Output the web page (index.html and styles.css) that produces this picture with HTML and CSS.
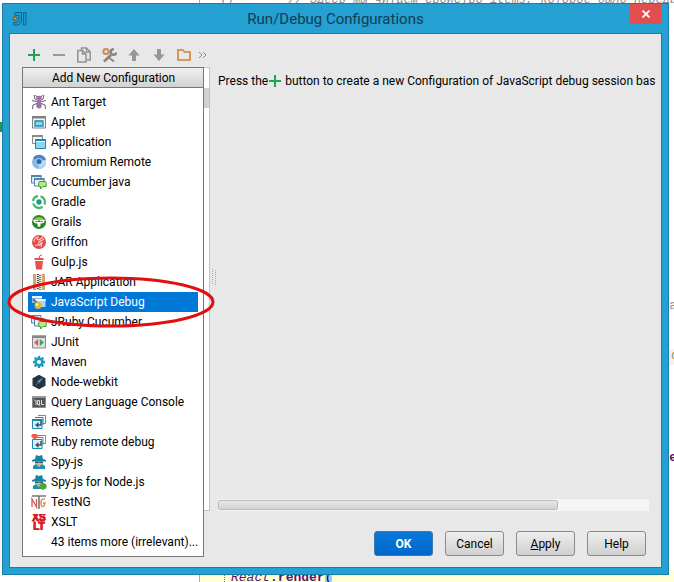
FILE: index.html
```
<!DOCTYPE html>
<html lang="en">
<head>
<meta charset="utf-8">
<title>Run/Debug Configurations</title>
<link rel="stylesheet" href="styles.css">
</head>
<body>
<div class="stage">
  <div class="editor" aria-hidden="true">
    <div class="line comment"><span>{}</span><span>// Здесь мы читаем свойство items, которое было передано</span></div>
    <div class="editor-rest">
      <span class="gutter"><i class="mark"></i></span>
      <span class="right-code"><i class="frag comment">ta</i><i class="frag olive">c</i><i class="frag purple">se</i></span>
    </div>
    <div class="line call"><span class="fold"></span><em>React</em>.<b>render</b><span class="paren">(</span></div>
  </div>

  <main class="dialog">
    <header class="titlebar">
      <svg class="logo" viewBox="0 0 16 16"><path d="M3 1.500H9.500V9Q9.500 14 4 14H1.500V11.500H4Q7 11 7 8V4.500H3Z" fill="#1c9bd0" stroke="#0b6896"/><path d="M11.500 1.500H14V14H11.500Z" fill="#1c9bd0" stroke="#0b6896"/><circle cx="3" cy="7.500" r="1.800" fill="#e58a20" stroke="#70501f"/></svg>
      <h1>Run/Debug Configurations</h1>
      <button class="close" aria-label="Close"><svg viewBox="0 0 8 8"><path d="M.5.5L7.500 7.500M7.500.5L.5 7.500" stroke="#fff" stroke-width="1.700"/></svg></button>
    </header>

    <div class="content">
      <div class="toolbar">
        <button aria-label="Add"><svg viewBox="0 0 16 16"><path d="M8 2V14M2 8H14" stroke="#1fa354" stroke-width="2"/></svg></button>
        <button aria-label="Remove"><svg viewBox="0 0 16 16"><path d="M2 8H14" stroke="#9a9a9a" stroke-width="2"/></svg></button>
        <button aria-label="Copy"><svg viewBox="0 0 16 16" fill="#e8e8e8" stroke="#929292" stroke-width="1.500"><path d="M5.500 1H10.500L14.200 5V13H5.500Z"/><path d="M1.800 3.500H6.500L10 7V15H1.800Z"/><path d="M6.500 3.500V7H10M10.500 1V5H14" fill="none"/></svg></button>
        <button aria-label="Edit defaults"><svg viewBox="0 0 16 16" fill="none"><circle cx="5" cy="4.500" r="2.600" stroke="#cb8a50" stroke-width="2"/><path d="M3 14.500L10 8" stroke="#858585" stroke-width="2.800"/><path d="M12.800 2.200A2.800 2.800 0 1 0 15.300 5.500" stroke="#858585" stroke-width="2.400"/><path d="M7.500 10.500L13 14.500" stroke="#858585" stroke-width="1.800"/></svg></button>
        <button aria-label="Move up"><svg viewBox="0 0 16 16"><path d="M8 2L13.500 8.500H10V14H6V8.500H2.500Z" fill="#969696"/></svg></button>
        <button aria-label="Move down"><svg viewBox="0 0 16 16"><path d="M8 14L13.500 7.500H10V2H6V7.500H2.500Z" fill="#969696"/></svg></button>
        <button aria-label="New folder"><svg viewBox="0 0 16 16"><path d="M2 3H7L8.500 5H14V13H2Z" fill="none" stroke="#cf9a60" stroke-width="2"/></svg></button>
        <button class="more" aria-label="More"><svg viewBox="0 0 9 8"><path d="M1 1L4 4L1 7M5 1L8 4L5 7" fill="none" stroke="#8f8f8f"/></svg></button>
      </div>

      <div class="panes">
        <aside class="tree">
          <div class="tree-scroll"></div>
          <section class="popup">
            <h2>Add New Configuration</h2>
            <ul>
              <li><button><svg viewBox="0 0 16 16"><g fill="none" stroke="#655f69"><path d="M8 7L4 5L3 1M8 7L12 5L13 1M7 8L1 6.500M9 8L15 6.500M7 9L2 11L1.500 15M9 9L14 11L14.500 15M6 3L4.500 1M10 3L11.500 1"/></g><ellipse cx="8" cy="3.700" rx="2.800" ry="2" fill="#a36bb1"/><circle cx="8" cy="7.300" r="1.900" fill="#a36bb1"/><ellipse cx="8" cy="11.500" rx="2.700" ry="3" fill="#a36bb1"/></svg>Ant Target</button></li>
              <li><button><svg viewBox="0 0 16 16"><path d="M1.500 2.500H14.500V14H1.500Z" fill="#f4f6f7" stroke="#808080"/><path d="M1 2H15V4.500H1Z" fill="#808080"/><path d="M4 7H12V12H4Z" fill="#8fd6ed" stroke="#1d89ab" stroke-width="1.300"/></svg>Applet</button></li>
              <li><button><svg viewBox="0 0 16 16"><path d="M1.500 1.500H11.500V9.500H1.500Z" fill="#f6f8f9" stroke="#8a8a8a"/><path d="M1 1H12V3H1Z" fill="#8a8a8a"/><path d="M4.500 6H14.500V14.500H4.500Z" fill="#90d5ed" stroke="#1c88ab"/><path d="M4 5H15V7H4Z" fill="#1c88ab"/><path d="M5 7H14V8H5Z" fill="#fff"/></svg>Application</button></li>
              <li><button><svg viewBox="0 0 16 16"><circle cx="8" cy="8" r="7" fill="#84b9e6"/><path d="M8 8L2 4Q5 0 10 1Q14 2 15 6H8Z" fill="#4d88c4"/><path d="M8 8L15 6Q16 12 8 15Z" fill="#b5d9f4"/><circle cx="8" cy="7.500" r="3.300" fill="#cfe6fa"/><circle cx="8" cy="7.500" r="2.600" fill="#2f6aae"/></svg>Chromium Remote</button></li>
              <li><button><svg viewBox="0 0 16 16"><path d="M.5 1.500H10V9H.5Z" fill="#dcebf4" stroke="#5784aa"/><path d="M3.500 4.500H13V12H3.500Z" fill="#eaf4fa" stroke="#5784aa"/><path d="M0 1H10.500V3H0ZM3 4H13.500V6H3Z" fill="#5784aa"/><path d="M8.500 7.500H14.500Q16 9 15 12.500H12L9.500 15V12.500H8Q6.500 10 8.500 7.500Z" fill="#b6e88a" stroke="#449d2f"/></svg>Cucumber java</button></li>
              <li><button><svg viewBox="0 0 16 16"><path d="M9.500 2.300A6 6 0 0 1 13.500 10.500M11.500 12.800A6 6 0 0 1 2.200 9.500M2 7A6 6 0 0 1 7 2" fill="none" stroke="#4cb56f" stroke-width="2.300"/><circle cx="8" cy="8" r="2.700" fill="#12a38a"/></svg>Gradle</button></li>
              <li><button><svg viewBox="0 0 16 16"><circle cx="8" cy="8" r="7" fill="#278726"/><path d="M2 6Q8 0 14 6L12 7H4Z" fill="#8cc94e"/><path d="M2 6H7V8H9V6H14Q13 10 9.500 9.500L9.500 12L8 13L6.500 12V9.500Q3 10 2 6Z" fill="#fff"/><path d="M4 7H6.500V8H5ZM9.500 7H12L11 8H9.500Z" fill="#267a23"/></svg>Grails</button></li>
              <li><button><svg viewBox="0 0 16 16"><circle cx="8" cy="8" r="7" fill="#de4d48"/><path d="M3 8Q3 4 7 3Q5 6 8 6L12 3M4 11Q8 12 8 8L13 5M8 12L11 8L10 13" fill="none" stroke="#ffd5d0" stroke-width="1.100"/></svg>Griffon</button></li>
              <li><button><svg viewBox="0 0 16 16"><path d="M8 5L8.500 2L11 .8" fill="none" stroke="#db5350"/><path d="M3.500 4H12.500V6H3.500ZM4 7H12L11 15.500H5Z" fill="#eb4f4b"/></svg>Gulp.js</button></li>
              <li><button><svg viewBox="0 0 16 16"><path d="M2 0H5V16H2ZM11 0H14V16H11Z" fill="#d6a36e"/><path d="M5 0H11V16H5Z" fill="#e9e6e0"/><path d="M7 0V16" stroke="#555" stroke-width="2" stroke-dasharray="1 1"/><path d="M9 1V16" stroke="#777" stroke-width="2" stroke-dasharray="1 1"/></svg>JAR Application</button></li>
              <li class="selected"><button><svg viewBox="0 0 16 16"><path d="M1 2H11V9H1Z" fill="#8dbde7"/><path d="M4 5H14.500V13H4Z" fill="#a9d4f3"/><path d="M1 2H11V4H1ZM4 5H14.500V7H4Z" fill="#e8f5fc"/><path d="M2 5L6 9" stroke="#4f739c" stroke-width="2"/><circle cx="7" cy="11.500" r="3.500" fill="#d9b92d"/><circle cx="6" cy="10.500" r="1.300" fill="#fff5a5"/></svg>JavaScript Debug</button>
                <svg class="callout" viewBox="0 0 208 52" preserveAspectRatio="none"><ellipse cx="104" cy="26" rx="102" ry="24" fill="none" stroke="#e01010" stroke-width="3"/></svg></li>
              <li><button><svg viewBox="0 0 16 16"><path d="M.5 1.500H10V9H.5Z" fill="#dcebf4" stroke="#5784aa"/><path d="M3.500 4.500H13V12H3.500Z" fill="#eaf4fa" stroke="#5784aa"/><path d="M8.500 7.500H14.500Q16 9 15 12.500H12L9.500 15V12.500H8Q6.500 10 8.500 7.500Z" fill="#b6e88a" stroke="#449d2f"/></svg>JRuby Cucumber</button></li>
              <li><button><svg viewBox="0 0 16 16"><path d="M1.500 2H14.500V14H1.500Z" fill="#dedede" stroke="#888"/><path d="M1 1.500H15V4H1Z" fill="#888"/><path d="M7.200 5V12L3 8.500Z" fill="#e75650"/><path d="M8.800 5V12L13 8.500Z" fill="#35a957"/></svg>JUnit</button></li>
              <li><button><svg viewBox="0 0 16 16"><path d="M8 2V14M2 8H14M3.700 3.700L12.300 12.300M12.300 3.700L3.700 12.300" stroke="#1a9cc2" stroke-width="2.400"/><circle cx="8" cy="8" r="3.300" fill="#fff" stroke="#1a9cc2" stroke-width="2.400"/></svg>Maven</button></li>
              <li><button><svg viewBox="0 0 16 16"><path d="M8 .7L14.500 4.200V11.800L8 15.300L1.500 11.800V4.200Z" fill="#29333f"/><path d="M12.500 3L9 9L4 12L7 6Z" fill="#365a85"/><path d="M12 4L7 7.500L8 8.500Z" fill="#8fb4d8"/></svg>Node-webkit</button></li>
              <li><button><svg viewBox="0 0 16 16"><path d="M1.500 2.500H14.500V13.500H1.500Z" fill="#555" stroke="#8c8c8c"/><path d="M1 2H15V4H1Z" fill="#999"/><path d="M3 6H4M5 6V11M6.500 6.500H8.500V10.500H6.500ZM8 10L9 12M10.500 6V10.500H13" fill="none" stroke="#ddd"/></svg>Query Language Console</button></li>
              <li><button><svg viewBox="0 0 16 16"><path d="M7 1.500H14.500V9.500H12" fill="#fff" stroke="#858585"/><path d="M4 3.500H12V11" fill="#fff" stroke="#1c88ab"/><path d="M1.500 5.500H11V14.500H1.500Z" fill="#d9f2fa" stroke="#1c88ab"/><path d="M1 5H11.500V7H1Z" fill="#1c88ab"/><path d="M10 7V11H6" fill="none" stroke="#46535a" stroke-width="1.500"/><path d="M7.500 8V14L4 11Z" fill="#46535a"/></svg>Remote</button></li>
              <li><button><svg viewBox="0 0 16 16"><path d="M7 1.500H14.500V9.500H12" fill="#fff" stroke="#858585"/><path d="M4 3.500H12V11" fill="#fff" stroke="#858585"/><path d="M1.500 5.500H11V14.500H1.500Z" fill="#d9f2fa" stroke="#1c88ab"/><path d="M10 7V11H6" fill="none" stroke="#46535a" stroke-width="1.500"/><path d="M7.500 8V14L4 11Z" fill="#46535a"/><path d="M1.500 0H5.500L7.500 2L3.500 6L0 2Z" fill="#e95d51"/></svg>Ruby remote debug</button></li>
              <li><button><svg viewBox="0 0 16 16"><path d="M4 5L5 1L8 2L11 1L12 5L15 6V7.500H1V6Z" fill="#1683a6"/><path d="M4 7.500H12V10L8 13L4 10Z" fill="#dfb38a"/><path d="M4 7.500H12V9H9L8 8.300L7 9H4Z" fill="#31586b"/><path d="M2 15V12L5 10L8 13L11 10L14 12V15Z" fill="#1791b5"/></svg>Spy-js</button></li>
              <li><button><svg viewBox="0 0 16 16"><path d="M4 5L5 1L8 2L11 1L12 5L15 6V7.500H1V6Z" fill="#1683a6"/><path d="M4 7.500H12V10L8 13L4 10Z" fill="#dfb38a"/><path d="M4 7.500H12V9H9L8 8.300L7 9H4Z" fill="#31586b"/><path d="M2 15V12L5 10L8 13L11 10L14 12V15Z" fill="#1791b5"/><path d="M12 8.500L15.500 10.500V14L12 16L8.500 14V10.500Z" fill="#4ea535"/></svg>Spy-js for Node.js</button></li>
              <li><button><svg viewBox="0 0 16 16"><path d="M1 2H15M8 2V15" stroke="#777" stroke-width="1.600"/><path d="M1 13V5L5.500 13V5" fill="none" stroke="#d65b50" stroke-width="1.300"/><path d="M14 5Q10 4 10 9Q10 14 13 12L14 9H12" fill="none" stroke="#cf9151" stroke-width="1.400"/></svg>TestNG</button></li>
              <li><button><svg viewBox="0 0 16 16" aria-hidden="true"><text class="xslt" x="8" y="7" text-anchor="middle">XS</text><text class="xslt" x="8" y="16" text-anchor="middle">LT</text></svg>XSLT</button></li>
              <li><button class="no-icon">43 items more (irrelevant)...</button></li>
            </ul>
          </section>
        </aside>
        <div class="splitter"><svg viewBox="0 0 4 16"><path d="M.5 0V16M3.500 1V16" stroke="#aaa" stroke-dasharray="1 1"/></svg></div>
        <section class="details">
          <p>Press the<svg viewBox="1 1 14 14"><path d="M8 2V14M2 8H14" stroke="#1fa354" stroke-width="2"/></svg>button to create a new Configuration of JavaScript debug session bas</p>
          <div class="hscroll"><div class="thumb"></div></div>
        </section>
      </div>

      <footer class="actions">
        <button class="primary">OK</button>
        <button>Cancel</button>
        <button><u>A</u>pply</button>
        <button>Help</button>
      </footer>
    </div>
  </main>
</div>
</body>
</html>
```
FILE: styles.css
```
* { box-sizing: border-box; }
body { margin: 0; font: 12px/20px Roboto, "Open Sans", sans-serif; color: #000; background: #fff; }
button { font: inherit; color: inherit; border: 0; padding: 0; background: none; }
h1, h2, p, ul { margin: 0; padding: 0; font-weight: normal; }
svg { display: block; flex: none; }

.stage { position: relative; min-height: 100vh; display: flex; flex-direction: column; overflow: hidden; }

.editor { flex: 1; display: flex; flex-direction: column; font: 12px/14px "Liberation Mono", monospace; overflow: hidden; }
.editor .line { white-space: nowrap; }
.line.comment { display: flex; gap: 54px; height: 4px; margin-left: 199px; padding-left: 20px; line-height: 1px; border-left: 1px solid #aaa; }
.comment { color: #8c8c8c; font-style: italic; }
.editor-rest { flex: 1; display: flex; justify-content: space-between; }
.gutter { width: 2px; padding-top: 118px; background: #f6f6f6; }
.mark { display: block; height: 10px; background: #179c48; }
.right-code { width: 12px; padding-top: 295px; display: flex; flex-direction: column; }
.frag { height: 16px; margin-bottom: 34px; font-style: normal; }
.frag.olive { padding-left: 9px; color: #9a8a2a; background: #f2f2f2; }
.frag.purple { margin-top: 52px; color: #660e7a; font-weight: bold; }
.line.call { margin-left: 199px; padding-left: 24px; border-left: 1px solid #aaa; background: #ffffd7; font-size: 13px; height: 12px; line-height: 16px; display: flex; }
.call em, .call b { color: #660e7a; }
.call .fold { width: 7px; border-left: 1px dotted #777; }
.call .paren { background: #99ccff; }

.dialog { position: absolute; inset: 3px 5px 7px 2px; display: flex; flex-direction: column; padding: 0 6px 6px; background: #24a0d3; border: 1px solid #1a7ea9; }
.titlebar { height: 29px; flex: none; display: grid; grid-template-columns: 32px 1fr 32px; align-items: center; }
.logo { width: 16px; height: 16px; margin-left: 3px; }
.titlebar h1 { font-size: 15px; text-align: center; color: #123d50; }
.close { align-self: start; width: 31px; height: 20px; display: grid; place-items: center; background: #e04e50; }
.close svg { width: 8px; height: 8px; }

.content { flex: 1; min-height: 0; display: flex; flex-direction: column; padding: 9px 12px 11px; background: #e8e8e8; border: 1px solid #1a7ea9; }
.toolbar { display: flex; gap: 9px; height: 24px; padding-left: 4px; align-items: center; }
.toolbar svg { width: 16px; height: 16px; }
.toolbar .more { margin-left: -3px; }
.toolbar .more svg { width: 9px; height: 8px; }

.panes { flex: 1; min-height: 0; display: flex; }
.tree { position: relative; width: 188px; display: flex; justify-content: flex-end; background: #fff; border: 1px solid #c4c4c4; }
.tree-scroll { width: 6px; height: 20px; margin-top: 20px; background: #d0d0d0; }
.popup { position: absolute; top: -1px; left: -1px; width: 182px; background: #fff; border: 1px solid #777; }
.popup h2 { height: 20px; padding-left: 29px; font-size: 12px; line-height: 20px; background: linear-gradient(#efefef, #d2d2d2); border-bottom: 1px solid #777; }
.popup ul { list-style: none; padding: 4px 5px; }
.popup li { position: relative; height: 20px; }
.popup li button { display: flex; align-items: center; gap: 4px; width: 100%; height: 20px; padding-left: 3px; white-space: nowrap; }
.popup li button.no-icon { padding-left: 23px; }
.popup li svg { width: 16px; height: 16px; }
.xslt { font: bold 10px "Liberation Sans", sans-serif; fill: #d71920; stroke: #d71920; stroke-width: 1px; }
.popup .selected { z-index: 1; color: #fff; background: #0078d7; }
.popup .selected .callout { position: absolute; left: -21px; top: -16px; width: 208px; height: 52px; pointer-events: none; }

.splitter { width: 8px; padding-bottom: 24px; display: grid; place-items: center; }
.splitter svg { width: 4px; height: 16px; }
.details { flex: 1; min-width: 0; display: flex; flex-direction: column; justify-content: space-between; }
.details p { display: flex; align-items: center; white-space: nowrap; padding-top: 4px; }
.details p svg { width: 14px; height: 14px; margin-right: 3px; }
.hscroll { height: 12px; padding: 1px 0; background: #f5f5f5; }
.thumb { width: 79%; height: 10px; border: 1px solid #bbb; border-radius: 2px; background: linear-gradient(#e8e8e8, #d2d2d2); }

.actions { display: flex; justify-content: flex-end; gap: 12px; padding: 20px 3px 0 0; }
.actions button { width: 59px; height: 25px; border: 1px solid #8a8a8a; border-radius: 3px; background: linear-gradient(#eee, #d0d0d0); }
.actions .primary { color: #fff; font-weight: bold; background: linear-gradient(#0a78d8, #0068cc); border-color: #3f77a8; }
```
